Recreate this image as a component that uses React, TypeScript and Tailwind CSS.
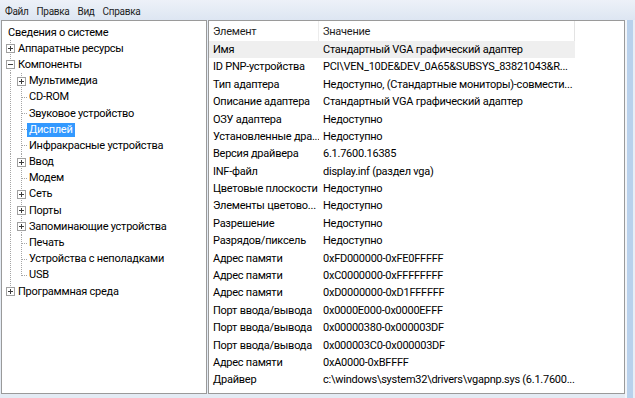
type TreeItem = {
  label: string
  level: 0 | 1 | 2
  box?: 'plus' | 'minus'
  last?: boolean
  selected?: boolean
}

const tree: TreeItem[] = [
  { label: 'Сведения о системе', level: 0 },
  { label: 'Аппаратные ресурсы', level: 1, box: 'plus' },
  { label: 'Компоненты', level: 1, box: 'minus' },
  { label: 'Мультимедиа', level: 2, box: 'plus' },
  { label: 'CD-ROM', level: 2 },
  { label: 'Звуковое устройство', level: 2 },
  { label: 'Дисплей', level: 2, selected: true },
  { label: 'Инфракрасные устройства', level: 2 },
  { label: 'Ввод', level: 2, box: 'plus' },
  { label: 'Модем', level: 2 },
  { label: 'Сеть', level: 2, box: 'plus' },
  { label: 'Порты', level: 2, box: 'plus' },
  { label: 'Запоминающие устройства', level: 2, box: 'plus' },
  { label: 'Печать', level: 2 },
  { label: 'Устройства с неполадками', level: 2 },
  { label: 'USB', level: 2, last: true },
  { label: 'Программная среда', level: 1, box: 'plus', last: true },
]

const rows: [string, string][] = [
  ['Имя', 'Стандартный VGA графический адаптер'],
  ['ID PNP-устройства', 'PCI\\VEN_10DE&DEV_0A65&SUBSYS_83821043&R...'],
  ['Тип адаптера', 'Недоступно, (Стандартные мониторы)-совмести...'],
  ['Описание адаптера', 'Стандартный VGA графический адаптер'],
  ['ОЗУ адаптера', 'Недоступно'],
  ['Установленные дра...', 'Недоступно'],
  ['Версия драйвера', '6.1.7600.16385'],
  ['INF-файл', 'display.inf (раздел vga)'],
  ['Цветовые плоскости', 'Недоступно'],
  ['Элементы цветово...', 'Недоступно'],
  ['Разрешение', 'Недоступно'],
  ['Разрядов/пиксель', 'Недоступно'],
  ['Адрес памяти', '0xFD000000-0xFE0FFFFF'],
  ['Адрес памяти', '0xC0000000-0xFFFFFFFF'],
  ['Адрес памяти', '0xD0000000-0xD1FFFFFF'],
  ['Порт ввода/вывода', '0x0000E000-0x0000EFFF'],
  ['Порт ввода/вывода', '0x00000380-0x000003DF'],
  ['Порт ввода/вывода', '0x000003C0-0x000003DF'],
  ['Адрес памяти', '0xA0000-0xBFFFF'],
  ['Драйвер', 'c:\\windows\\system32\\drivers\\vgapnp.sys (6.1.7600...'],
]

const LINE = '#a5a5a5'

function ExpandBox({ x, kind }: { x: number; kind: 'plus' | 'minus' }) {
  return (
    <g>
      <rect x={x + 0.5} y={4.5} width={8} height={8} fill="#fff" stroke="#a0a0a0" />
      <line x1={x + 2} y1={8.5} x2={x + 7} y2={8.5} stroke="#3c3c3c" />
      {kind === 'plus' && <line x1={x + 4.5} y1={6} x2={x + 4.5} y2={11} stroke="#3c3c3c" />}
    </g>
  )
}

function Connector({ item }: { item: TreeItem }) {
  const w = item.level === 1 ? 13 : 24
  return (
    <svg width={w} height={17} className="shrink-0 overflow-visible" shapeRendering="crispEdges">
      <line x1={7.5} y1={0} x2={7.5} y2={item.level === 1 && item.last ? 8 : 17} stroke={LINE} strokeDasharray="1 1" />
      {item.level === 2 && (
        <>
          <line x1={18.5} y1={0} x2={18.5} y2={item.last ? 9 : 17} stroke={LINE} strokeDasharray="1 1" />
          {!item.box && <line x1={19} y1={8.5} x2={24} y2={8.5} stroke={LINE} strokeDasharray="1 1" />}
        </>
      )}
      {item.box && <ExpandBox x={item.level === 1 ? 3 : 14} kind={item.box} />}
    </svg>
  )
}

function TreePanel() {
  return (
    <div className="w-[206px] h-[374px] bg-white border border-[#9a9a9a] pt-[3.5px] pl-[1px] overflow-hidden">
      {tree.map((item) => (
        <div key={item.label} className="h-[16.2px] flex items-center whitespace-nowrap">
          {item.level === 0 ? <div className="w-[3px] shrink-0" /> : <Connector item={item} />}
          <span
            className={`px-[2px] leading-[14px] ${item.selected ? 'bg-[#3399ff] text-white' : ''}`}
          >
            {item.label}
          </span>
        </div>
      ))}
    </div>
  )
}

function DetailsPanel() {
  return (
    <div className="flex-1 h-[374px] bg-white border border-[#9a9a9a] overflow-hidden">
      <div className="h-[20px] flex items-center text-[#1e1e1e]">
        <div className="w-[110px] pl-[4px] pt-[3px] h-full flex items-center border-r border-[#ececec]">Элемент</div>
        <div className="w-[256px] pl-[4px] pt-[3px] h-full flex items-center border-r border-[#e3e3e3]">Значение</div>
      </div>
      {rows.map(([k, v], i) => (
        <div key={i} className="h-[17.4px] flex items-center whitespace-nowrap">
          <div className={`flex w-[366px] h-full items-center pt-[1px] ${i === 0 ? 'bg-[#efefef]' : ''}`}>
            <div className="w-[110px] pl-[4px] overflow-hidden">{k}</div>
            <div className="w-[256px] pl-[4px] overflow-hidden">{v}</div>
          </div>
        </div>
      ))}
    </div>
  )
}

export default function App() {
  return (
    <div className="w-[635px] h-[398px] overflow-hidden flex flex-col bg-[#e4ebf4] text-black text-[11px] tracking-[-0.25px] font-['Roboto',sans-serif]">
      <div className="h-[20px] shrink-0 flex items-center gap-[8px] pl-[5px] pt-[2px] text-[10px] tracking-[-0.3px] text-[#1e1e1e] bg-gradient-to-b from-[#edf1f8] to-[#dde6f2]">
        <span>Файл</span>
        <span>Правка</span>
        <span>Вид</span>
        <span>Справка</span>
      </div>
      <div className="flex flex-1 min-h-0">
        <div className="w-[1px] shrink-0" />
        <TreePanel />
        <div className="w-[1px] shrink-0" />
        <DetailsPanel />
        <div className="w-[10px] shrink-0 flex">
          <div className="w-[2px] bg-[#f2f5f9]" />
          <div className="w-[6px] bg-[#b9d1ec]" />
          <div className="w-[2px] bg-[#e8eef6]" />
        </div>
      </div>
    </div>
  )
}
